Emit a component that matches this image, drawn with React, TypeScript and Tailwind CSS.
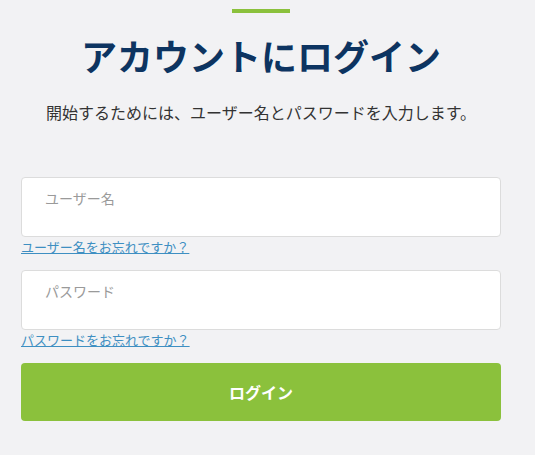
import React, { useState } from 'react';

const font = { fontFamily: '"Noto Sans CJK JP", "Noto Sans", sans-serif' };

const LoginForm = () => {
  const [username, setUsername] = useState('');
  const [password, setPassword] = useState('');

  return (
    <div className="w-[480px] ml-[21px] flex flex-col">
      <div className="flex justify-center pt-[9px]">
        <div className="w-[58px] h-[4px] bg-[#8bc13c]" />
      </div>

      <h1 className="mt-[18px] text-center text-[36px] leading-[48px] font-bold text-[#0d3461]">
        アカウントにログイン
      </h1>

      <p className="mt-[21px] text-center text-[16px] leading-[24px] text-[#333333]">
        開始するためには、ユーザー名とパスワードを入力します。
      </p>

      <input
        type="text"
        value={username}
        onChange={(e) => setUsername(e.target.value)}
        placeholder="ユーザー名"
        className="mt-[53px] h-[60px] w-full rounded-[4px] border border-[#dcdcdc] bg-white px-[23px] pb-[18px] text-[14px] text-[#333] placeholder:text-[#9a9a9a] outline-none"
        style={font}
      />
      <a href="#" className="self-start mt-[1px] text-[13px] leading-[18px] text-[#3e8fc2] underline">
        ユーザー名をお忘れですか？
      </a>

      <input
        type="password"
        value={password}
        onChange={(e) => setPassword(e.target.value)}
        placeholder="パスワード"
        className="mt-[14px] h-[60px] w-full rounded-[4px] border border-[#dcdcdc] bg-white px-[23px] pb-[18px] text-[14px] text-[#333] placeholder:text-[#9a9a9a] outline-none"
        style={font}
      />
      <a href="#" className="self-start mt-[1px] text-[13px] leading-[18px] text-[#3e8fc2] underline">
        パスワードをお忘れですか？
      </a>

      <button
        type="button"
        className="mt-[14px] h-[58px] w-full rounded-[4px] bg-[#8bc13c] text-[16px] font-bold text-white"
        style={font}
      >
        ログイン
      </button>
    </div>
  );
};

export default function App() {
  return (
    <div className="min-h-[455px] w-[535px] bg-[#f2f2f4]" style={font}>
      <LoginForm />
    </div>
  );
}
